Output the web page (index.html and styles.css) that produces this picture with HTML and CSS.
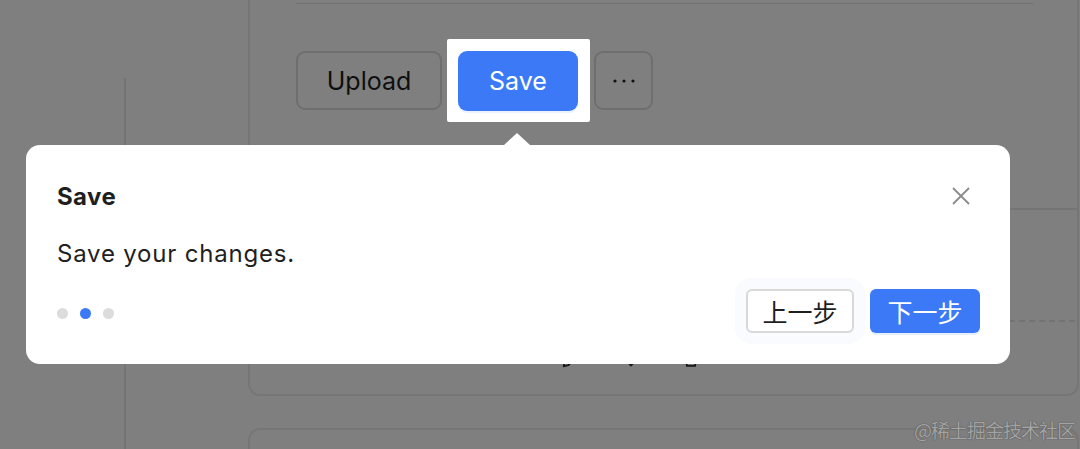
FILE: index.html
```html
<!DOCTYPE html>
<html lang="en">
<head>
<meta charset="utf-8">
<title>Tour</title>
<link rel="stylesheet" href="styles.css">
</head>
<body>
<div class="app">
  <aside class="side"><div class="rail"></div></aside>
  <main class="main">
    <section class="card">
      <div class="card-head"></div>
      <div class="toolbar">
        <button class="btn btn-default">Upload</button>
        <div class="spot"><button class="btn btn-primary">Save</button></div>
        <button class="btn btn-default btn-more" aria-label="More">
          <svg viewBox="0 0 24 6" width="24" height="6"><circle cx="3" cy="3" r="1.6" fill="#222"/><circle cx="12" cy="3" r="1.6" fill="#222"/><circle cx="21" cy="3" r="1.6" fill="#222"/></svg>
        </button>
      </div>
      <div class="divider"></div>
      <div class="dashed"></div>
      <div class="actions">
        <svg class="ico" viewBox="0 0 24 24" width="22" height="22"><path d="M4 20l1.2-5L15.5 4.7l3.8 3.8L9 18.8 4 20z" fill="none" stroke="#333" stroke-width="2" stroke-linejoin="round"/></svg>
        <svg class="ico" viewBox="0 0 24 24" width="22" height="22"><path d="M12 3v16M5.5 12.5L12 19l6.5-6.5" fill="none" stroke="#333" stroke-width="2"/></svg>
        <svg class="ico" viewBox="0 0 24 24" width="22" height="22"><path d="M5 6h14M9 6V3.5h6V6M6.5 6l1 13.5h9l1-13.5" fill="none" stroke="#333" stroke-width="2"/></svg>
      </div>
    </section>
    <section class="card card-next"></section>
  </main>
</div>

<div class="tour" role="dialog" aria-label="Save">
  <div class="tour-arrow"></div>
  <div class="tour-header">
    <div class="tour-title">Save</div>
    <button class="tour-close" aria-label="Close">
      <svg viewBox="0 0 20 20" width="20" height="20"><path d="M2 2l16 16M18 2L2 18" stroke="#8a8a8a" stroke-width="1.8" fill="none"/></svg>
    </button>
  </div>
  <div class="tour-desc">Save your changes.</div>
  <div class="tour-footer">
    <div class="tour-dots"><span class="dot"></span><span class="dot active"></span><span class="dot"></span></div>
    <div class="tour-btns">
      <button class="tbtn tbtn-prev">上一步</button>
      <button class="tbtn tbtn-next">下一步</button>
    </div>
  </div>
</div>

<div class="watermark">@稀土掘金技术社区</div>
</body>
</html>
```
FILE: styles.css
```css
* { box-sizing: border-box; }
html, body { margin: 0; padding: 0; }
body {
  width: 1080px;
  height: 449px;
  overflow: hidden;
  background: #fff;
  position: relative;
  font-family: Inter, "Noto Sans", "Noto Sans CJK SC", sans-serif;
  color: #1f1f1f;
}
.app { display: flex; height: 449px; }
.side { width: 126px; padding-top: 78px; flex: none; }
.rail { height: 100%; border-right: 2px solid #e9e9e9; }
.main { margin-left: 122px; width: 831px; flex: none; }
.card {
  border: 2px solid #ececec;
  border-top: none;
  border-radius: 0 0 12px 12px;
  height: 396px;
  padding: 0 0 0 46px;
}
.card-head { height: 4px; border-bottom: 1px solid #e2e2e2; margin-right: 44px; }
.toolbar { display: flex; align-items: center; margin-top: 35px; height: 83px; }
.btn {
  font-family: Inter, "Noto Sans", sans-serif;
  font-size: 25px;
  height: 59px;
  border-radius: 9px;
  cursor: pointer;
}
.btn-default { background: #fff; border: 2px solid #dcdcdc; color: #1f1f1f; width: 146px; }
.btn-primary { background: #3b79f6; border: none; color: #fff; width: 120px; height: 60px; box-shadow: 0 2px 0 rgba(5,100,255,0.08); }
.btn-more { width: 59px; margin-left: 4px; padding: 0; display: flex; align-items: center; justify-content: center; }
.btn-more svg { display: block; }
.spot {
  margin-left: 5px;
  padding: 12px 12px 11px 11px;
  background: #fff;
  border-radius: 2px;
  position: relative;
  z-index: 1;
  box-shadow: 0 0 0 3000px rgba(0,0,0,0.5);
}
.divider { margin: 86px 0 0 -46px; border-top: 2px solid #ebebeb; }
.dashed { margin: 110px 2px 0 -44px; border-top: 2px dashed #e6e6e6; }
.actions { display: flex; gap: 38px; margin: 26px 0 0 264px; }
.ico { display: block; }
.card-next { margin-top: 32px; border-top: 2px solid #ececec; border-bottom: none; border-radius: 12px 12px 0 0; height: 40px; }

.tour {
  position: absolute;
  left: 26px;
  top: 145px;
  width: 984px;
  height: 219px;
  background: #fff;
  border-radius: 14px;
  z-index: 2;
  padding: 31px 30px 31px 31px;
  display: flex;
  flex-direction: column;
}
.tour-arrow {
  position: absolute;
  top: -12px;
  left: 478px;
  width: 26px;
  height: 12px;
  background: #fff;
  clip-path: polygon(50% 0, 100% 100%, 0 100%);
}
.tour-header { display: flex; justify-content: space-between; align-items: center; height: 40px; }
.tour-title { font-size: 24px; font-weight: 700; color: #1f1f1f; letter-spacing: 0.4px; }
.tour-close { border: none; background: none; padding: 0; margin-right: 9px; display: block; width: 20px; height: 20px; }
.tour-close svg { display: block; }
.tour-desc { font-size: 24px; margin-top: 23px; color: #1f1f1f; letter-spacing: 0.8px; }
.tour-footer { margin-top: auto; display: flex; justify-content: space-between; align-items: center; }
.tour-dots { display: flex; gap: 12px; margin-top: 4px; }
.dot { width: 11px; height: 11px; border-radius: 50%; background: #dcdcdc; }
.dot.active { background: #3b79f6; }
.tour-btns { display: flex; gap: 16px; }
.tbtn {
  font-family: "Noto Sans CJK SC", sans-serif;
  font-size: 25px;
  height: 44px;
  border-radius: 6px;
  padding: 0;
  line-height: 1;
  white-space: nowrap;
}
.tbtn-prev { width: 108px; background: #fff; border: 2px solid #d9d9d9; color: #1f1f1f; box-shadow: 0 0 0 11px #fafbfe; }
.tbtn-next { width: 110px; background: #3b79f6; border: none; color: #fff; box-shadow: 0 2px 0 rgba(5,100,255,0.1); }

.watermark {
  position: absolute;
  right: 5px;
  bottom: 6px;
  z-index: 3;
  font-family: "Noto Sans CJK SC", sans-serif;
  font-size: 19px;
  color: #a3a3a3;
  text-shadow: 0 0 1px #555, 0 0 1px #555;
  letter-spacing: -1px;
}
```
